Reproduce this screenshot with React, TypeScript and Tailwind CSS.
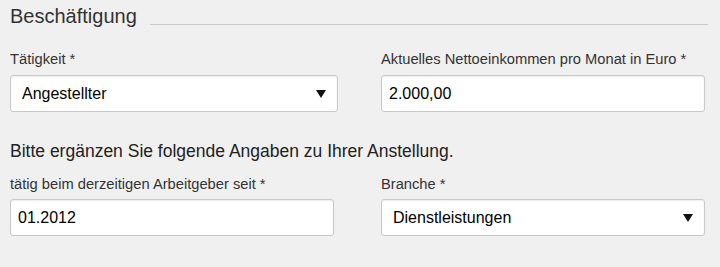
export default function App() {
  const box = 'h-[37px] rounded-[3px] border border-[#c9c9c9] bg-white shadow-[inset_0_1px_2px_rgba(0,0,0,0.08)]';
  const label = 'block text-[14.7px] leading-[20px] text-[#333]';

  function Select({ value }: { value: string }) {
    return (
      <div className={`${box} flex items-center justify-between pl-[11px] pr-[11px] text-[16px] text-black`}>
        <span>{value}</span>
        <svg width="10" height="8" viewBox="0 0 10 8">
          <path d="M0 0h10L5 8z" fill="#111" />
        </svg>
      </div>
    );
  }

  function Input({ value }: { value: string }) {
    return (
      <input
        readOnly
        value={value}
        className={`${box} block w-full px-[7px] text-[16px] text-black outline-none`}
      />
    );
  }

  return (
    <main
      className="h-[267px] w-[720px] overflow-hidden bg-[#f0f0f0] pl-[10px] pt-[4px]"
      style={{ fontFamily: '"Liberation Sans", Arial, sans-serif' }}
    >
      <div className="flex items-end pr-[12px]">
        <h2 className="text-[20px] leading-[24px] text-[#333]">Beschäftigung</h2>
        <div className="mb-[3px] ml-[13px] h-px flex-1 bg-[#c8c8c8]" />
      </div>

      <div className="mt-[21px] flex">
        <div className="w-[328px]">
          <label className={label}>Tätigkeit *</label>
          <div className="mt-[6px]">
            <Select value="Angestellter" />
          </div>
        </div>
        <div className="ml-[43px] w-[324px]">
          <label className={label}>Aktuelles Nettoeinkommen pro Monat in Euro *</label>
          <div className="mt-[6px]">
            <Input value="2.000,00" />
          </div>
        </div>
      </div>

      <p className="mt-[27px] text-[17.5px] leading-[24px] text-[#222]">
        Bitte ergänzen Sie folgende Angaben zu Ihrer Anstellung.
      </p>

      <div className="mt-[11px] flex">
        <div className="w-[324px]">
          <label className={label}>tätig beim derzeitigen Arbeitgeber seit *</label>
          <div className="mt-[5px]">
            <Input value="01.2012" />
          </div>
        </div>
        <div className="ml-[47px] w-[324px]">
          <label className={label}>Branche *</label>
          <div className="mt-[5px]">
            <Select value="Dienstleistungen" />
          </div>
        </div>
      </div>
    </main>
  );
}
